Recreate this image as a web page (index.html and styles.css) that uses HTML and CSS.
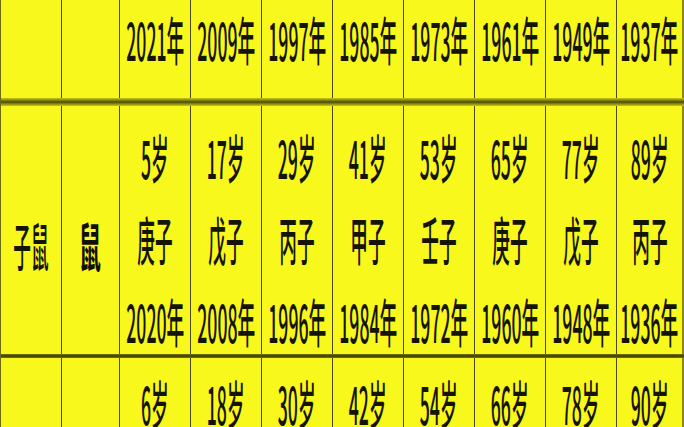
FILE: index.html
```html
<!DOCTYPE html>
<html lang="zh">
<head>
<meta charset="utf-8">
<link rel="stylesheet" href="styles.css">
</head>
<body>
<div class="sheet">
  <div class="row head">
    <div class="cell"></div>
    <div class="cell"></div>
    <div class="cell"><span class="t">2021年</span></div>
    <div class="cell"><span class="t">2009年</span></div>
    <div class="cell"><span class="t">1997年</span></div>
    <div class="cell"><span class="t">1985年</span></div>
    <div class="cell"><span class="t">1973年</span></div>
    <div class="cell"><span class="t">1961年</span></div>
    <div class="cell"><span class="t">1949年</span></div>
    <div class="cell"><span class="t">1937年</span></div>
  </div>
  <div class="rule thick"></div>
  <div class="row body">
    <div class="cell side"><span class="t name">子鼠</span></div>
    <div class="cell side"><span class="t animal">鼠</span></div>
    <div class="cell"><span class="t">5岁</span><span class="t">庚子</span><span class="t">2020年</span></div>
    <div class="cell"><span class="t">17岁</span><span class="t">戊子</span><span class="t">2008年</span></div>
    <div class="cell"><span class="t">29岁</span><span class="t">丙子</span><span class="t">1996年</span></div>
    <div class="cell"><span class="t">41岁</span><span class="t">甲子</span><span class="t">1984年</span></div>
    <div class="cell"><span class="t">53岁</span><span class="t">壬子</span><span class="t">1972年</span></div>
    <div class="cell"><span class="t">65岁</span><span class="t">庚子</span><span class="t">1960年</span></div>
    <div class="cell"><span class="t">77岁</span><span class="t">戊子</span><span class="t">1948年</span></div>
    <div class="cell"><span class="t">89岁</span><span class="t">丙子</span><span class="t">1936年</span></div>
  </div>
  <div class="rule thin"></div>
  <div class="row next">
    <div class="cell"></div>
    <div class="cell"></div>
    <div class="cell"><span class="t">6岁</span></div>
    <div class="cell"><span class="t">18岁</span></div>
    <div class="cell"><span class="t">30岁</span></div>
    <div class="cell"><span class="t">42岁</span></div>
    <div class="cell"><span class="t">54岁</span></div>
    <div class="cell"><span class="t">66岁</span></div>
    <div class="cell"><span class="t">78岁</span></div>
    <div class="cell"><span class="t">90岁</span></div>
  </div>
</div>
</body>
</html>
```
FILE: styles.css
```css
html, body {
  margin: 0;
  padding: 0;
  background: #f8f81c;
  overflow: hidden;
}
.sheet {
  width: 684px;
  height: 427px;
  overflow: hidden;
  background: #f8f81c;
  border-left: 1px solid #6b6b10;
  box-sizing: border-box;
  font-family: "Noto Sans CJK SC", "Noto Sans", sans-serif;
  color: #141408;
}
.row {
  display: grid;
  grid-template-columns: 61px 58px repeat(7, 71px) 68px;
}
.cell {
  border-right: 1px solid #4a4a10;
  display: flex;
  flex-direction: column;
  align-items: center;
}
.cell:last-child {
  border-right: 3px solid #8a8a10;
}
.t {
  display: block;
  font-size: 52px;
  line-height: 1;
  white-space: nowrap;
  transform: scaleX(0.34);
  font-weight: 500;
}
.head {
  height: 98px;
}
.head .cell {
  padding-top: 13px;
}
.rule.thick {
  height: 8px;
  background: linear-gradient(#c8c814, #74740c 35%, #4a4a08 50%, #74740c 65%, #c8c814);
}
.body {
  height: 248px;
}
.body .cell {
  padding-top: 25px;
  gap: 30px;
}
.body .cell.side {
  justify-content: center;
  padding-top: 30px;
}
.t.animal {
  font-weight: 700;
  transform: scaleX(0.42);
  color: #101008;
}
.rule.thin {
  height: 4px;
  background: linear-gradient(#7a7a0c, #3a3a06 50%, #7a7a0c);
}
.next {
  height: 80px;
}
.next .cell {
  padding-top: 19px;
}
```
